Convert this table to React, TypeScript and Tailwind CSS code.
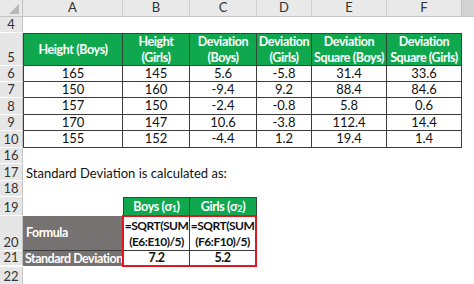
const font = { fontFamily: "Lato, 'Open Sans', sans-serif" };

function RowHead({ n, h }: { n: string; h: string }) {
  return (
    <div
      className={`w-[23px] ${h} shrink-0 bg-[#e6e6e6] border-b border-r border-b-white border-r-[#c4c4c4] flex items-end justify-center text-[13px] leading-[15px] text-[#333]`}
    >
      {n}
    </div>
  );
}

const cellCls = "border-r border-b border-[#3c3c3c] flex items-center justify-center text-[13px] text-[#111]";
const headCls =
  "border-r border-b border-[#2d4a35] bg-[#0fa84f] flex items-center justify-center text-center text-[12.5px] leading-[16px] tracking-[-0.4px] font-bold text-white whitespace-nowrap";

const data = [
  ["6", "165", "145", "5.6", "-5.8", "31.4", "33.6", "h-[16px]"],
  ["7", "150", "160", "-9.4", "9.2", "88.4", "84.6", "h-[16px]"],
  ["8", "157", "150", "-2.4", "-0.8", "5.8", "0.6", "h-[17px]"],
  ["9", "170", "147", "10.6", "-3.8", "112.4", "14.4", "h-[16px]"],
  ["10", "155", "152", "-4.4", "1.2", "19.4", "1.4", "h-[17px]"],
];

export default function App() {
  return (
    <div className="w-[474px] h-[284px] overflow-hidden bg-white" style={font}>
      {/* column letters */}
      <div className="flex h-[17px] bg-[#e9e9e9] border-b border-[#c4c4c4] text-[13px] text-[#333]">
        <div className="w-[23px] shrink-0 border-r border-[#c4c4c4] flex items-end justify-end pr-[3px] pb-[2px]">
          <svg width="10" height="10" viewBox="0 0 10 10">
            <polygon points="10,0 10,10 0,10" fill="#b8b8b8" />
          </svg>
        </div>
        <div className="w-[100px] border-r border-[#d0d0d0] flex items-center justify-center">A</div>
        <div className="w-[67px] border-r border-[#d0d0d0] flex items-center justify-center">B</div>
        <div className="w-[67px] border-r border-[#d0d0d0] flex items-center justify-center">C</div>
        <div className="w-[55px] border-r border-[#d0d0d0] flex items-center justify-center">D</div>
        <div className="w-[75px] border-r border-[#d0d0d0] flex items-center justify-center">E</div>
        <div className="w-[75px] border-r border-[#c4c4c4] flex items-center justify-center">F</div>
        <div className="flex-1 bg-[#d2d2d2]" />
      </div>

      {/* row 4 */}
      <div className="flex">
        <RowHead n="4" h="h-[16px]" />
      </div>

      {/* row 5 header */}
      <div className="flex">
        <RowHead n="5" h="h-[33px]" />
        <div className="flex border-t border-[#2d4a35]">
          <div className={`w-[100px] h-[32px] border-l ${headCls}`}>Height (Boys)</div>
          <div className={`w-[67px] h-[32px] ${headCls}`}>Height<br />(Girls)</div>
          <div className={`w-[67px] h-[32px] ${headCls}`}>Deviation<br />(Boys)</div>
          <div className={`w-[55px] h-[32px] ${headCls}`}>Deviation<br />(Girls)</div>
          <div className={`w-[75px] h-[32px] ${headCls}`}>Deviation<br />Square (Boys)</div>
          <div className={`w-[75px] h-[32px] ${headCls}`}>Deviation<br />Square (Girls)</div>
        </div>
      </div>

      {data.map((r) => (
        <div key={r[0]} className="flex">
          <RowHead n={r[0]} h={r[7]} />
          <div className={`w-[100px] ${r[7]} border-l ${cellCls}`}>{r[1]}</div>
          <div className={`w-[67px] ${r[7]} ${cellCls}`}>{r[2]}</div>
          <div className={`w-[67px] ${r[7]} ${cellCls}`}>{r[3]}</div>
          <div className={`w-[55px] ${r[7]} ${cellCls}`}>{r[4]}</div>
          <div className={`w-[75px] ${r[7]} ${cellCls}`}>{r[5]}</div>
          <div className={`w-[75px] ${r[7]} ${cellCls}`}>{r[6]}</div>
        </div>
      ))}

      {/* row 16 */}
      <div className="flex">
        <RowHead n="16" h="h-[16px]" />
      </div>
      {/* row 17 */}
      <div className="flex">
        <RowHead n="17" h="h-[17px]" />
        <div className="pl-[3px] flex items-end text-[13px] leading-[16px] text-[#111] whitespace-nowrap">
          Standard Deviation is calculated as:
        </div>
      </div>
      {/* row 18 */}
      <div className="flex">
        <RowHead n="18" h="h-[16px]" />
      </div>
      {/* row 19 */}
      <div className="flex">
        <RowHead n="19" h="h-[19px]" />
        <div className="w-[100px]" />
        <div className="flex border-t border-[#2d4a35]">
          <div className={`w-[67px] h-[18px] border-l ${headCls}`}>
            Boys (σ<sub className="text-[9px] leading-none">1</sub>)
          </div>
          <div className={`w-[67px] h-[18px] ${headCls}`}>
            Girls (σ<sub className="text-[9px] leading-none">2</sub>)
          </div>
        </div>
      </div>
      {/* rows 20-21 */}
      <div className="flex">
        <div className="flex flex-col">
          <RowHead n="20" h="h-[35px]" />
          <RowHead n="21" h="h-[15px]" />
        </div>
        <div className="flex flex-col w-[100px] text-[12.5px] font-bold text-white tracking-[-0.5px]">
          <div className="h-[35px] bg-[#777272] border-b border-[#3c3c3c] flex items-center pl-[3px]">
            Formula
          </div>
          <div className="h-[15px] bg-[#777272] flex items-center pl-[2px] leading-[15px] whitespace-nowrap">
            Standard Deviation
          </div>
        </div>
        <div className="-ml-[1px] -mt-[1px] h-[52px] border-2 border-[#e3151f] grid grid-cols-[66px_65px] grid-rows-[34px_14px] text-[12px] tracking-[-0.5px] font-bold text-[#111]">
          <div className="border-r border-b border-[#3c3c3c] flex items-center justify-center text-center leading-[16px]">
            =SQRT(SUM<br />(E6:E10)/5)
          </div>
          <div className="border-b border-[#3c3c3c] flex items-center justify-center text-center leading-[16px]">
            =SQRT(SUM<br />(F6:F10)/5)
          </div>
          <div className="border-r border-[#3c3c3c] flex items-center justify-center text-[12.5px] leading-[14px]">7.2</div>
          <div className="flex items-center justify-center text-[12.5px] leading-[14px]">5.2</div>
        </div>
      </div>
      {/* row 22 */}
      <div className="flex">
        <RowHead n="22" h="h-[18px]" />
      </div>
    </div>
  );
}
